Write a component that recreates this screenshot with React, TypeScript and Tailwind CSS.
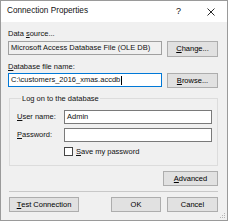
import React from 'react';

function Btn({ children, className = '' }: { children: React.ReactNode; className?: string }) {
  return (
    <button
      type="button"
      className={`flex h-[15px] items-center justify-center border border-[#adadad] bg-[#e1e1e1] text-[7.5px] leading-none text-black ${className}`}
    >
      {children}
    </button>
  );
}

export default function App() {
  return (
    <div className="relative flex h-[221px] w-[228px] flex-col overflow-hidden border border-[#9a9a9a] bg-[#f0f0f0] font-['Liberation_Sans',Arial,sans-serif] text-[7.5px] text-[#111]">
      {/* title bar */}
      <div className="flex h-[21px] shrink-0 items-center bg-white pl-[6px]">
        <span className="text-[8.2px]">Connection Properties</span>
        <span className="ml-auto mr-[26px] text-[9px]">?</span>
        <svg width="8" height="8" viewBox="0 0 8 8" className="mr-[12px]">
          <path d="M0.5 0.5 L7.5 7.5 M7.5 0.5 L0.5 7.5" stroke="#111" strokeWidth="0.9" />
        </svg>
      </div>

      <div className="flex flex-1 flex-col pl-[7px] pr-[9px] pt-[6px]">
        <div className="h-[11px] leading-[11px]">
          Data <u>s</u>ource...
        </div>
        <div className="mt-[2px] flex items-start">
          <div className="flex h-[14px] w-[154px] items-center border border-[#a0a0a0] bg-[#f0f0f0] pl-[2px]">
            Microsoft Access Database File (OLE DB)
          </div>
          <Btn className="ml-auto h-[16px] w-[51px]">
            <u>C</u>hange...
          </Btn>
        </div>

        <div className="mt-[4px] h-[11px] leading-[11px]">
          <u>D</u>atabase file name:
        </div>
        <div className="mt-[1px] flex items-start">
          <div className="flex h-[14px] w-[154px] items-center border border-[#0078d7] bg-white pl-[2px]">
            C:\customers_2016_xmas.accdb
            <span className="ml-[1px] h-[9px] w-px bg-black" />
          </div>
          <Btn className="ml-auto w-[51px]">
            <u>B</u>rowse...
          </Btn>
        </div>

        <fieldset className="ml-[1px] mt-[5px] border border-[#dcdcdc] pb-[9px] pl-[7px] pr-[5px]">
          <legend className="ml-[4px] px-[1px] leading-[11px]">Log on to the database</legend>
          <div className="mt-[6px] grid grid-cols-[47px_1fr] items-center gap-y-[4px]">
            <span>
              <u>U</u>ser name:
            </span>
            <div className="flex h-[14px] items-center border border-[#7a7a7a] bg-white pl-[2px]">Admin</div>
            <span>
              <u>P</u>assword:
            </span>
            <div className="h-[14px] border border-[#7a7a7a] bg-white" />
          </div>
          <div className="mt-[5px] flex items-center pl-[47px]">
            <span className="h-[9px] w-[9px] border border-[#444] bg-white" />
            <span className="ml-[3px] leading-[9px]">
              <u>S</u>ave my password
            </span>
          </div>
        </fieldset>

        <Btn className="ml-auto mt-[5px] w-[55px]">
          <u>A</u>dvanced
        </Btn>

        <div className="ml-[1px] mt-[5px] h-px bg-[#c8c8c8]" />

        <div className="mt-[5px] flex items-start">
          <Btn className="ml-[1px] w-[70px]">
            <u>T</u>est Connection
          </Btn>
          <Btn className="ml-auto w-[50px] border-[#0078d7]">OK</Btn>
          <Btn className="ml-[6px] w-[51px]">Cancel</Btn>
        </div>
      </div>

      {/* size grip */}
      <svg width="6" height="6" viewBox="0 0 6 6" className="absolute bottom-[1px] right-[1px]">
        <rect x="4" y="0" width="1" height="1" fill="#b5b5b5" />
        <rect x="2" y="2" width="1" height="1" fill="#b5b5b5" />
        <rect x="4" y="2" width="1" height="1" fill="#b5b5b5" />
        <rect x="0" y="4" width="1" height="1" fill="#b5b5b5" />
        <rect x="2" y="4" width="1" height="1" fill="#b5b5b5" />
        <rect x="4" y="4" width="1" height="1" fill="#b5b5b5" />
      </svg>
    </div>
  );
}
